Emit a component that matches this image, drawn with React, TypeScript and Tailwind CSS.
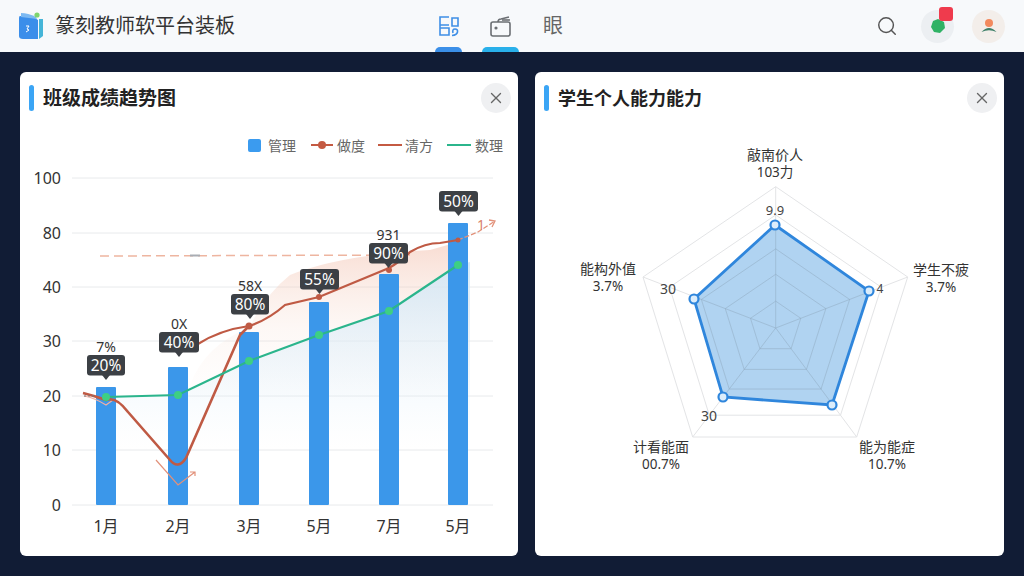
import { Search, X } from "lucide-react";

const font = '"Noto Sans", "Noto Sans CJK SC", sans-serif';

const gridLines = [
  { y: 178, label: "100" },
  { y: 233, label: "80" },
  { y: 287, label: "40" },
  { y: 341, label: "30" },
  { y: 396, label: "20" },
  { y: 450, label: "10" },
  { y: 505, label: "0" },
];

const bars = [
  { x: 96, top: 387, month: "1月" },
  { x: 168, top: 367, month: "2月" },
  { x: 239, top: 332, month: "3月" },
  { x: 309, top: 302, month: "5月" },
  { x: 379, top: 274, month: "7月" },
  { x: 448, top: 223, month: "5月" },
];

const greenDots = [
  [106, 397],
  [178, 395],
  [249, 361],
  [319, 335],
  [389, 311],
  [458, 265],
];

const tips = [
  { x: 87, y: 355, w: 38, text: "20%", note: "7%" },
  { x: 159, y: 332, w: 40, text: "40%", note: "0X" },
  { x: 231, y: 294, w: 38, text: "80%", note: "58X" },
  { x: 300, y: 269, w: 39, text: "55%", note: "" },
  { x: 369, y: 243, w: 39, text: "90%", note: "931" },
  { x: 439, y: 191, w: 39, text: "50%", note: "" },
];

function Logo() {
  return (
    <svg width="27" height="28" viewBox="0 0 27 28">
      <path d="M2 4 L17 6 L20 8 L20 27 L5 27 Q1 27 1 24 L1 6 Q1 4 2 4Z" fill="#3b8eea" />
      <path d="M3 1 Q10 1 18 5 L19 7 L3 5 Z" fill="#7cb9f2" />
      <path d="M21 7 L25 7 L25 24 L21 27 Z" fill="#45b5d8" />
      <circle cx="19" cy="3" r="2.6" fill="#7ed56f" />
      <path d="M8 14 L11 14 L9 17 L11 18 L8 20" fill="none" stroke="#fff" strokeWidth="1" />
    </svg>
  );
}

function NavBoardIcon() {
  return (
    <svg width="20" height="21" viewBox="0 0 20 21" fill="none" stroke="#3f8fe6" strokeWidth="1.6">
      <path d="M10 1 H1 V9 H10 M1 9 V19 H10 V12 H1" />
      <path d="M13 2 H19 V10 H13 Z" />
      <path d="M14 17 Q13 13 16 13 Q19 13 18.5 16 Q18 19 13 19.5" />
    </svg>
  );
}

function NavRadioIcon() {
  return (
    <svg width="22" height="21" viewBox="0 0 22 21" fill="none" stroke="#6b6f73" strokeWidth="1.6">
      <rect x="1" y="6" width="19" height="14" rx="2" />
      <path d="M8 6 Q8 3 11 3 L19 1" />
      <path d="M12 4 H20" />
      <circle cx="6" cy="12" r="0.8" fill="#6b6f73" />
    </svg>
  );
}

function Notice() {
  return (
    <div className="relative flex h-[33px] w-[33px] items-center justify-center rounded-full bg-[#eceff2]">
      <svg width="16" height="16" viewBox="0 0 16 16">
        <path d="M8 1 L14 4 L15 10 L10 15 L4 14 L1 9 L3 3Z" fill="#2fb265" />
      </svg>
      <span className="absolute right-[1px] top-[-3px] h-[14px] w-[14px] rounded-[3px] bg-[#ef3b4d]" />
    </div>
  );
}

function UserAvatar() {
  return (
    <div className="flex h-[33px] w-[33px] items-center justify-center rounded-full bg-[#f3eeea]">
      <svg width="18" height="18" viewBox="0 0 18 18">
        <circle cx="9" cy="6" r="4" fill="#f28a5e" />
        <path d="M1.5 15 Q9 7 16.5 15 Q9 11.5 1.5 15Z" fill="#3d7f68" />
      </svg>
    </div>
  );
}

function CardHead({ title, large }: { title: string; large?: boolean }) {
  return (
    <div className="flex h-[52px] shrink-0 items-center pl-[9px] pr-[7px]">
      <span className="h-[26px] w-[5px] rounded-full bg-[#3ba5f5]" />
      <h2 className={`ml-[9px] flex-1 font-bold text-[#222] ${large ? "text-[19px]" : "text-[18px]"}`}>{title}</h2>
      <button className="flex h-[30px] w-[30px] items-center justify-center rounded-full bg-[#eff0f2] text-[#666]">
        <X size={18} strokeWidth={1.8} />
      </button>
    </div>
  );
}

function Legend() {
  return (
    <div className="flex h-[18px] items-center justify-end pr-[15px] text-[14px] text-[#666]">
      <span className="h-[13px] w-[13px] rounded-[2px] bg-[#3b9bef]" />
      <span className="ml-[7px]">管理</span>
      <span className="relative ml-[15px] h-[2px] w-[22px] bg-[#c45a42]">
        <span className="absolute left-[7px] top-[-3px] h-[8px] w-[8px] rounded-full bg-[#c45a42]" />
      </span>
      <span className="ml-[4px]">做度</span>
      <span className="ml-[13px] h-[2px] w-[24px] bg-[#c45a42]" />
      <span className="ml-[3px]">清方</span>
      <span className="ml-[14px] h-[2px] w-[24px] bg-[#2bb58c]" />
      <span className="ml-[4px]">数理</span>
    </div>
  );
}

function TrendChart() {
  return (
    <svg className="min-h-0 w-full flex-1" viewBox="20 154 498 402" style={{ fontFamily: font }}>
      <defs>
        <linearGradient id="peach" x1="0" y1="0" x2="0" y2="1">
          <stop offset="0" stopColor="#f2b9a4" stopOpacity="0.5" />
          <stop offset="0.55" stopColor="#f6dccf" stopOpacity="0.2" />
          <stop offset="1" stopColor="#f6dccf" stopOpacity="0" />
        </linearGradient>
        <linearGradient id="sky" x1="0" y1="0" x2="0" y2="1">
          <stop offset="0" stopColor="#cfe7f8" stopOpacity="0.85" />
          <stop offset="1" stopColor="#e8f3fb" stopOpacity="0" />
        </linearGradient>
      </defs>

      {gridLines.map((g) => (
        <g key={g.label}>
          <line x1="72" x2="493" y1={g.y} y2={g.y} stroke="#e8eaec" strokeWidth="1" />
          <text x="61" y={g.y + 6} textAnchor="end" fontSize="16" fill="#333">
            {g.label}
          </text>
        </g>
      ))}

      <path d="M190 385 Q205 345 249 328 Q265 295 290 275 Q340 255 430 250 L458 242 L470 300 L470 400 L190 400Z" fill="url(#peach)" />
      <path d="M106 397 L178 395 L249 361 L319 335 L389 311 L458 265 L470 262 L470 450 L106 450Z" fill="url(#sky)" />

      <path d="M100 256 L410 255" stroke="#eeb5a0" strokeWidth="1.5" strokeDasharray="9 5" fill="none" />
      <line x1="190" x2="200" y1="255.5" y2="255.5" stroke="#a9adb3" strokeWidth="2" />

      {bars.map((b) => (
        <g key={b.x}>
          <rect x={b.x} y={b.top} width="20" height={505 - b.top} rx="1" fill="#3b97ea" />
          <text x={b.x + 10} y="532" textAnchor="middle" fontSize="16" fill="#333">
            {b.month}
          </text>
        </g>
      ))}

      <path d="M84 396 Q95 398 106 405 L113 400" fill="none" stroke="#f0b0a4" strokeWidth="1.2" />
      <path d="M83 393 Q95 396 106 400 Q116 396 128 412 L170 460 Q178 470 186 458 L240 335 L249 326" fill="none" stroke="#bf5a44" strokeWidth="2.6" strokeLinejoin="round" />
      <path d="M198 344 Q220 330 249 326 Q268 320 285 305 L319 297 L389 268 Q400 262 410 252 Q425 243 440 243 L458 240" fill="none" stroke="#bf5a44" strokeWidth="2.2" />
      <path d="M458 240 L478 232 L495 221" fill="none" stroke="#e2917a" strokeWidth="1.3" strokeDasharray="5 2" />
      <path d="M489 220 L495 221 L492 227" fill="none" stroke="#e2917a" strokeWidth="1.3" />
      <path d="M156 460 L178 485 L195 472 M190 472 H195 V476" fill="none" stroke="#e2917a" strokeWidth="1.2" />
      <path d="M84 396 H95" stroke="#777" strokeWidth="1" strokeDasharray="2 2" />
      <circle cx="249" cy="326" r="3.5" fill="#bf5a44" />
      <circle cx="319" cy="297" r="3" fill="#bf5a44" />
      <circle cx="389" cy="270" r="3" fill="#bf5a44" />
      <circle cx="458" cy="240" r="2.5" fill="#bf5a44" />

      <polyline points={greenDots.map((d) => d.join(",")).join(" ")} fill="none" stroke="#2bb58c" strokeWidth="2.2" />
      {greenDots.map((d) => (
        <circle key={d[0]} cx={d[0]} cy={d[1]} r="4" fill="#3ecf83" />
      ))}

      {tips.map((t) => (
        <g key={t.x}>
          <rect x={t.x} y={t.y} width={t.w} height="20.5" rx="3" fill="#3c4045" />
          <path d={`M${t.x + t.w / 2 - 4} ${t.y + 20} h8 l-4 5z`} fill="#3c4045" />
          <text x={t.x + t.w / 2} y={t.y + 16} textAnchor="middle" fontSize="15.5" fill="#fff">
            {t.text}
          </text>
          {t.note && (
            <text x={t.x + t.w / 2} y={t.y - 3.5} textAnchor="middle" fontSize="14" fill="#333">
              {t.note}
            </text>
          )}
        </g>
      ))}

      <text x="477" y="230" fontSize="14" fill="#d9826b">1</text>
    </svg>
  );
}

const center = [775.7, 328];
const vertices = [
  [775.7, 186.7],
  [907.7, 277],
  [856.7, 437],
  [692.7, 437],
  [643, 277],
];
const rings = [0.19, 0.38, 0.56, 0.8, 1];
const scores = [
  [775, 225],
  [869, 291],
  [832, 405],
  [723, 397],
  [694, 299],
];
const axisLabels = [
  { x: 775, y: 160, name: "敲南价人", value: "103力" },
  { x: 941, y: 275, name: "学生不疲", value: "3.7%" },
  { x: 887, y: 452, name: "能为能症", value: "10.7%" },
  { x: 661, y: 452, name: "计看能面", value: "00.7%" },
  { x: 608, y: 274, name: "能构外值", value: "3.7%" },
];

function ringPoints(f: number) {
  return vertices.map((v) => `${center[0] + (v[0] - center[0]) * f},${center[1] + (v[1] - center[1]) * f}`).join(" ");
}

function RadarChart() {
  return (
    <svg className="min-h-0 w-full flex-1" viewBox="535 124 469 432" style={{ fontFamily: font }}>
      <clipPath id="score">
        <polygon points={scores.map((s) => s.join(",")).join(" ")} />
      </clipPath>
      {rings.map((f) => (
        <polygon key={f} points={ringPoints(f)} fill="none" stroke="#e3e4e6" strokeWidth="1" />
      ))}
      {vertices.map((v) => (
        <line key={v[0]} x1={center[0]} y1={center[1]} x2={v[0]} y2={v[1]} stroke="#e3e4e6" strokeWidth="1" />
      ))}
      <polygon points={scores.map((s) => s.join(",")).join(" ")} fill="#b0d3f1" />
      <g clipPath="url(#score)">
        {rings.map((f) => (
          <polygon key={f} points={ringPoints(f)} fill="none" stroke="#8fa9bf" strokeOpacity="0.5" strokeWidth="1" />
        ))}
        {vertices.map((v) => (
          <line key={v[0]} x1={center[0]} y1={center[1]} x2={v[0]} y2={v[1]} stroke="#8fa9bf" strokeOpacity="0.5" />
        ))}
      </g>
      <polygon points={scores.map((s) => s.join(",")).join(" ")} fill="none" stroke="#2f86dc" strokeWidth="2.8" />
      {scores.map((s) => (
        <circle key={s[0]} cx={s[0]} cy={s[1]} r="4.5" fill="#dcedfb" stroke="#2f86dc" strokeWidth="2.2" />
      ))}

      {axisLabels.map((l) => (
        <g key={l.name} textAnchor="middle" fontSize="14" fill="#333">
          <text x={l.x} y={l.y}>{l.name}</text>
          <text x={l.x} y={l.y + 17} fontSize="13.5">{l.value}</text>
        </g>
      ))}
      <text x="775" y="215" textAnchor="middle" fontSize="13" fill="#444">9.9</text>
      <text x="668" y="294" textAnchor="middle" fontSize="14" fill="#444">30</text>
      <text x="880" y="293" textAnchor="middle" fontSize="12" fill="#444">4</text>
      <text x="709" y="421" textAnchor="middle" fontSize="14" fill="#444">30</text>
    </svg>
  );
}

export default function App() {
  return (
    <div className="flex h-[576px] w-[1024px] flex-col overflow-hidden bg-[#111c35]" style={{ fontFamily: font }}>
      <header className="flex h-[52px] shrink-0 items-center bg-[#f7f9fb]">
        <div className="ml-[18px] flex w-[365px] items-center">
          <Logo />
          <span className="ml-[10px] text-[20px] text-[#333]">篆刻教师软平台装板</span>
        </div>
        <nav className="relative flex h-full items-center">
          <div className="relative ml-[52px] flex h-full w-[27px] items-center justify-center">
            <NavBoardIcon />
            <span className="absolute bottom-0 h-[5px] w-[27px] rounded-t-[5px] bg-[#3b8fe8]" />
          </div>
          <div className="relative ml-[20px] flex h-full w-[37px] items-center justify-center">
            <NavRadioIcon />
            <span className="absolute bottom-0 h-[5px] w-[37px] rounded-t-[5px] bg-[#29b0ea]" />
          </div>
          <span className="ml-[24px] text-[20px] text-[#666]">眼</span>
        </nav>
        <div className="ml-auto flex items-center pr-[19px]">
          <Search size={22} strokeWidth={1.6} className="text-[#555]" />
          <div className="ml-[23px]">
            <Notice />
          </div>
          <div className="ml-[18px]">
            <UserAvatar />
          </div>
        </div>
      </header>

      <main className="flex min-h-0 flex-1 gap-[17px] p-[20px]">
        <section className="flex min-h-0 w-[498px] flex-col overflow-hidden rounded-[6px] bg-white">
          <CardHead title="班级成绩趋势图" large />
          <div className="mt-[12px]">
            <Legend />
          </div>
          <TrendChart />
        </section>
        <section className="flex min-h-0 flex-1 flex-col overflow-hidden rounded-[6px] bg-white">
          <CardHead title="学生个人能力能力" />
          <RadarChart />
        </section>
      </main>
    </div>
  );
}
